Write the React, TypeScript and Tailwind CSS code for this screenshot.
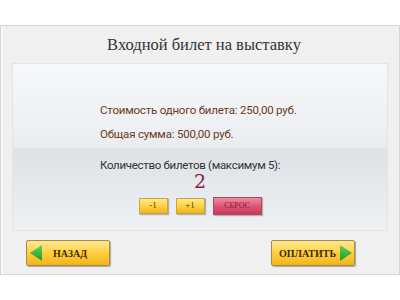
import React from "react";

const Tri = ({ dir }: { dir: "left" | "right" }) => (
  <svg width="13" height="16" viewBox="0 0 13 16">
    <defs>
      <linearGradient id={"g" + dir} x1="0" y1="0" x2="0" y2="1">
        <stop offset="0" stopColor="#5fd35a" />
        <stop offset="1" stopColor="#1f9a2a" />
      </linearGradient>
    </defs>
    {dir === "left" ? (
      <polygon points="12,0 12,16 0,8" fill={"url(#g" + dir + ")"} />
    ) : (
      <polygon points="1,0 1,16 13,8" fill={"url(#g" + dir + ")"} />
    )}
  </svg>
);

export default function App() {
  return (
    <div className="w-[400px] h-[300px] bg-white pt-[25px]">
      <div className="h-[250px] border border-[#d6d6d6] bg-[#f0f0f0] px-[11px] shadow-[inset_2px_0_0_#f8f8f8]">
        <div
          className="h-[37px] flex items-center justify-center text-[16.5px] text-[#333] pt-[1px] pl-[8px]"
          style={{ fontFamily: '"Liberation Serif", serif' }}
        >
          Входной билет на выставку
        </div>
        <div className="h-[168px] border border-[#e2e4e6] flex flex-col" style={{ fontFamily: 'Roboto, sans-serif' }}>
          <div className="h-[84px] bg-gradient-to-b from-[#f7f8fa] to-[#eaedf0] pl-[87px] pt-[36px] text-[11.5px] tracking-[-0.2px] text-[#6b3a1c] leading-[20px]">
            <div>Стоимость одного билета: 250,00 руб.</div>
            <div className="mt-[4px]">Общая сумма: 500,00 руб.</div>
          </div>
          <div className="flex-1 bg-gradient-to-b from-[#dde2e6] to-[#eef1f4] flex flex-col">
            <div className="pl-[87px] pt-[8px] text-[11.5px] tracking-[-0.3px] leading-[18px] text-[#333]">Количество билетов (максимум 5):</div>
            <div
              className="text-center text-[19px] leading-[20px] text-[#8a1d45] mt-[-3px]"
              style={{ fontFamily: '"DejaVu Serif", serif' }}
            >
              2
            </div>
            <div
              className="flex items-center justify-center gap-[8px] mt-[6px] text-[9px] text-[#5a3a10]"
              style={{ fontFamily: '"Liberation Serif", serif' }}
            >
              <div className="w-[29px] h-[16px] flex items-center justify-center border border-[#c9a24a] bg-gradient-to-b from-[#ffe88a] via-[#ffd23f] to-[#f2b41c] shadow-[1px_1px_1px_rgba(0,0,0,0.25)]">-1</div>
              <div className="w-[29px] h-[16px] flex items-center justify-center border border-[#c9a24a] bg-gradient-to-b from-[#ffe88a] via-[#ffd23f] to-[#f2b41c] shadow-[1px_1px_1px_rgba(0,0,0,0.25)]">+1</div>
              <div className="w-[49px] h-[18px] flex items-center justify-center border border-[#b8455f] bg-gradient-to-b from-[#f08aa0] via-[#e05577] to-[#c73a5c] text-[#7a1e35] text-[8px] shadow-[1px_1px_1px_rgba(0,0,0,0.25)]">СБРОС</div>
            </div>
          </div>
        </div>
        <div
          className="flex justify-between pl-[14px] pr-[33px] pt-[9px] text-[10px] font-semibold text-[#3c2a08]"
          style={{ fontFamily: '"Liberation Serif", serif' }}
        >
          <div className="w-[84px] h-[26px] flex items-center pl-[3px] gap-[10px] rounded-[2px] border border-[#a58a4a] bg-gradient-to-b from-[#ffe98f] via-[#ffcf3a] to-[#f3b51a] shadow-[1px_1px_1px_rgba(0,0,0,0.3)]">
            <Tri dir="left" />
            <span>НАЗАД</span>
          </div>
          <div className="w-[84px] h-[26px] flex items-center justify-end pr-[2px] gap-[3px] rounded-[2px] border border-[#a58a4a] bg-gradient-to-b from-[#ffe98f] via-[#ffcf3a] to-[#f3b51a] shadow-[1px_1px_1px_rgba(0,0,0,0.3)]">
            <span>ОПЛАТИТЬ</span>
            <Tri dir="right" />
          </div>
        </div>
      </div>
    </div>
  );
}
